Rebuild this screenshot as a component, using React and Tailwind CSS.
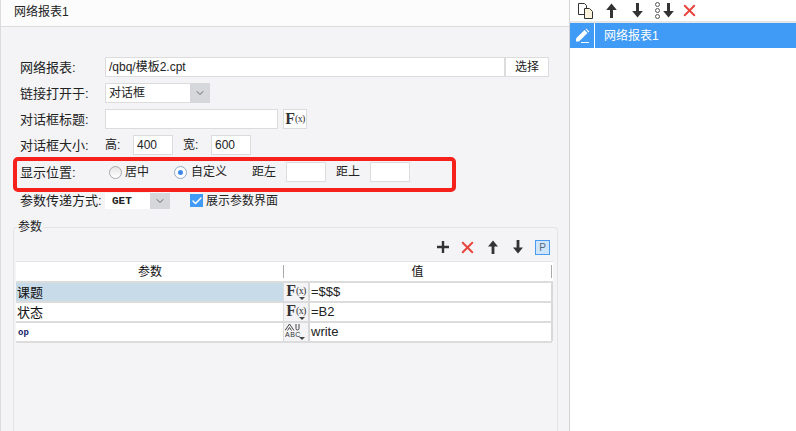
import { Check, ChevronDown, X } from "lucide-react";

const cjk = "font-['Liberation_Sans','Noto_Sans_CJK_SC',sans-serif]";

const Label = ({ children }) => <span className="w-[85px] h-5 shrink-0 text-[13px] leading-[21px] text-[#222]">{children}</span>;

const Box = ({ className = "", children }) => (
  <div className={`h-5 bg-white border border-[#dcdcdc] pl-[3px] text-[12px] leading-[19px] text-[#222] ${className}`}>{children}</div>
);

const Fx = () => (
  <span className="flex items-center font-['Liberation_Serif',serif] text-[#333] leading-none">
    <span className="font-bold text-[16px]">F</span>
    <span className="text-[10px] tracking-[-0.6px]">(x)</span>
  </span>
);

const Caret = () => (
  <span className="absolute right-[3px] bottom-[1px] w-0 h-0 border-x-[3px] border-x-transparent border-t-[3px] border-t-[#444]" />
);

const UpArrow = ({ size = 16 }) => (
  <svg width={size} height={size} viewBox="0 0 16 16" fill="#333">
    <path d="M8 1.5 13 7.5H9.4V15H6.6V7.5H3z" />
  </svg>
);

const DownArrow = ({ size = 16 }) => (
  <svg width={size} height={size} viewBox="0 0 16 16" fill="#333">
    <path d="M8 14.5 13 8.5H9.4V1H6.6V8.5H3z" />
  </svg>
);

const rows = [
  { name: "课题", value: "=$$$", active: true, type: "fx" },
  { name: "状态", value: "=B2", type: "fx" },
  { name: "op", value: "write", type: "abc" },
];

export default function App() {
  return (
    <div className={`w-[796px] h-[431px] overflow-hidden flex bg-white ${cjk}`}>
      <div className="w-[570px] h-full border-l border-l-[#dcdcdc] border-r border-r-[#d4d4d4] flex flex-col relative">
        <div className="h-[27px] shrink-0 bg-[#fcfcfc] border-b border-[#dcdcdc] pl-[13px] text-[12px] leading-[25px] text-[#222]">网络报表1</div>
        <div className="flex-1 bg-[#f4f4f7] pl-[19px] flex flex-col">
          <div className="flex h-5 mt-[30px]">
            <Label>网络报表:</Label>
            <Box className="w-[400px]">/qbq/模板2.cpt</Box>
            <div className="h-5 w-[44px] bg-white border border-[#dcdcdc] text-center text-[12px] leading-[19px] text-[#222]">选择</div>
          </div>
          <div className="flex h-5 mt-[6px]">
            <Label>链接打开于:</Label>
            <Box className="w-[105px] relative">
              对话框
              <span className="absolute -right-px -top-px -bottom-px w-[20px] bg-[#d5d7db] flex items-center justify-center">
                <ChevronDown size={12} strokeWidth={1.5} color="#444" />
              </span>
            </Box>
          </div>
          <div className="flex h-5 mt-[6px]">
            <Label>对话框标题:</Label>
            <Box className="w-[173px]" />
            <div className="ml-[5px] h-5 w-[24px] bg-white border border-[#dcdcdc] flex items-center justify-center"><Fx /></div>
          </div>
          <div className="flex h-5 mt-[6px] text-[12px] leading-[20px] text-[#222]">
            <Label>对话框大小:</Label>
            <span className="w-[28px]">高:</span>
            <Box className="w-[40px]">400</Box>
            <span className="ml-[10px] w-[28px]">宽:</span>
            <Box className="w-[40px]">600</Box>
          </div>
          <div className="flex h-5 items-center mt-[7px] text-[12px] leading-[20px] text-[#222]">
            <Label>显示位置:</Label>
            <span className="ml-[4px] w-[13px] h-[13px] rounded-full border border-[#aaa] bg-gradient-to-b from-[#e4e4e4] to-white" />
            <span className="ml-[3px]">居中</span>
            <span className="ml-[25px] w-[13px] h-[13px] rounded-full border border-[#8fa9c9] bg-white flex items-center justify-center">
              <span className="w-[5px] h-[5px] rounded-full bg-[#3f88ea]" />
            </span>
            <span className="ml-[4px]">自定义</span>
            <span className="ml-[25px]">距左</span>
            <Box className="ml-[10px] w-[40px]" />
            <span className="ml-[10px]">距上</span>
            <Box className="ml-[10px] w-[40px]" />
          </div>
          <div className="flex items-center mt-[11px] h-[16px]">
            <span className="w-[85px] shrink-0 -mt-[1px] text-[13px] leading-[16px] text-[#222]">参数传递方式:</span>
            <div className="relative w-[65px] h-[16px] bg-white pl-[7px] font-['Liberation_Mono',monospace] font-bold text-[11px] leading-[16px] text-[#222]">
              GET
              <span className="absolute right-0 top-0 bottom-0 w-[20px] bg-[#d5d7db] flex items-center justify-center">
                <ChevronDown size={12} strokeWidth={1.5} color="#444" />
              </span>
            </div>
            <span className="ml-[20px] -mt-[1px] w-[13px] h-[13px] bg-[#3f9bf5] flex items-center justify-center">
              <Check size={12} strokeWidth={3} color="#fff" />
            </span>
            <span className="ml-[3px] -mt-[1px] text-[12px] text-[#222]">展示参数界面</span>
          </div>
          <div className="relative -ml-[7px] mt-[18px] mr-[11px] flex-1 border border-[#e4e4e6] rounded-t-[4px] border-b-0 pl-[2px]">
            <span className="absolute -top-[9px] left-[3px] px-[1px] bg-[#f4f4f7] text-[12px] leading-[17px] text-[#222]">参数</span>
            <div className="h-[33px] flex items-center justify-end pr-[7px] pt-[5px]">
              <svg width="14" height="14" viewBox="0 0 14 14" fill="#333">
                <path d="M5.8 1h2.4v4.8H13v2.4H8.2V13H5.8V8.2H1V5.8h4.8z" />
              </svg>
              <X size={19} strokeWidth={2.5} color="#e8453c" className="ml-[8px]" />
              <span className="ml-[8px]"><UpArrow /></span>
              <span className="ml-[9px]"><DownArrow /></span>
              <span className="ml-[9px] w-[15px] h-[15px] border border-[#4a9af0] bg-[#cfe5fb] flex items-center justify-center text-[10px] text-[#56697c] font-['Liberation_Sans',sans-serif]">P</span>
            </div>
            <div className="w-[537px] border-t border-[#e4e4e6]">
              <div className="flex h-[19px] bg-white text-[12px] leading-[20px] text-[#111]">
                <div className="w-[268px] text-center relative">参数
                  <span className="absolute right-0 top-[3px] h-[13px] w-px bg-[#aaa]" />
                </div>
                <div className="flex-1 text-center relative pr-[2px]">值
                  <span className="absolute right-[1px] top-[3px] h-[13px] w-px bg-[#aaa]" />
                </div>
              </div>
              {rows.map((row) => (
                <div key={row.name} className="flex h-[20px] border-t-2 border-[#dcdcdc]">
                  <div className={`w-[268px] pl-[1px] border-r border-[#dcdcdc] ${row.active ? "bg-[#c8dbe9]" : "bg-white"} ${row.name === "op" ? "font-['Liberation_Mono',monospace] font-bold text-[9px] leading-[20px] pl-[2px] text-[#141c66]" : "text-[13px] leading-[19px] text-[#111]"}`}>
                    {row.name}
                  </div>
                  <div className="relative w-[24px] bg-[#f4f4f7] flex flex-col items-center">
                    {row.type === "fx" ? (
                      <Fx />
                    ) : (
                      <>
                        <svg width="16" height="8" viewBox="0 0 16 8" fill="none" stroke="#444" strokeWidth="1" className="self-start ml-px">
                          <path d="M0 7.5 4.5 1 9 7.5M2.5 7.5 4.5 4.5 6.5 7.5M11 1v4.5a1.5 1.5 0 0 0 3 0V1" />
                        </svg>
                        <span className="self-start ml-px text-[7px] leading-[8px] tracking-[0.5px] text-[#333] font-['Liberation_Sans',sans-serif]">ABC</span>
                      </>
                    )}
                    <Caret />
                  </div>
                  <div className="w-[245px] bg-white border-x-2 border-[#d8d8d8] pl-[1px] text-[13px] leading-[18px] text-[#222] font-['Liberation_Sans',sans-serif]">
                    {row.value}
                  </div>
                </div>
              ))}
              <div className="h-[2px] w-[536px] bg-[#dcdcdc]" />
            </div>
          </div>
        </div>
        <div className="absolute left-[12px] top-[157px] w-[443px] h-[35px] border-4 border-[#f5211a] rounded-[5px] pointer-events-none" />
      </div>
      <div className="flex-1 flex flex-col">
        <div className="h-[23px] border-b-2 border-[#e6e6e6] flex items-center pl-[7px] bg-white">
          <svg width="17" height="17" viewBox="0 0 17 17" fill="none" stroke="#333" strokeWidth="1">
            <path d="M1.5 1.5h6l2 2v9h-8z" fill="#fff" />
            <path d="M7.5 6.5h5l3 3v7h-8z" fill="#fbf3dc" />
          </svg>
          <span className="ml-[9px]"><UpArrow size={17} /></span>
          <span className="ml-[9px]"><DownArrow size={17} /></span>
          <span className="ml-[9px] flex items-center">
            <span className="flex flex-col gap-[1px]">
              <span className="w-[5px] h-[5px] rounded-full border border-[#555]" />
              <span className="w-[5px] h-[5px] rounded-full border border-[#555]" />
              <span className="w-[5px] h-[5px] rounded-full border border-[#555]" />
            </span>
            <DownArrow size={17} />
          </span>
          <X size={19} strokeWidth={2.5} color="#e8453c" className="ml-[3px]" />
        </div>
        <div className="h-[25px] bg-[#3f9bf5] flex items-center">
          <div className="w-[25px] h-full border-r border-white flex items-center justify-center">
            <svg width="15" height="15" viewBox="0 0 15 15" fill="#fff">
              <path d="M1 10.5 9.5 2l3 3L4 13.5H1z" />
              <path d="M10.5 1l.8-.5 3 3-.8 1z" />
              <path d="M6 14h8v1H6z" />
            </svg>
          </div>
          <span className="ml-[9px] text-[12px] text-white">网络报表1</span>
        </div>
      </div>
    </div>
  );
}
